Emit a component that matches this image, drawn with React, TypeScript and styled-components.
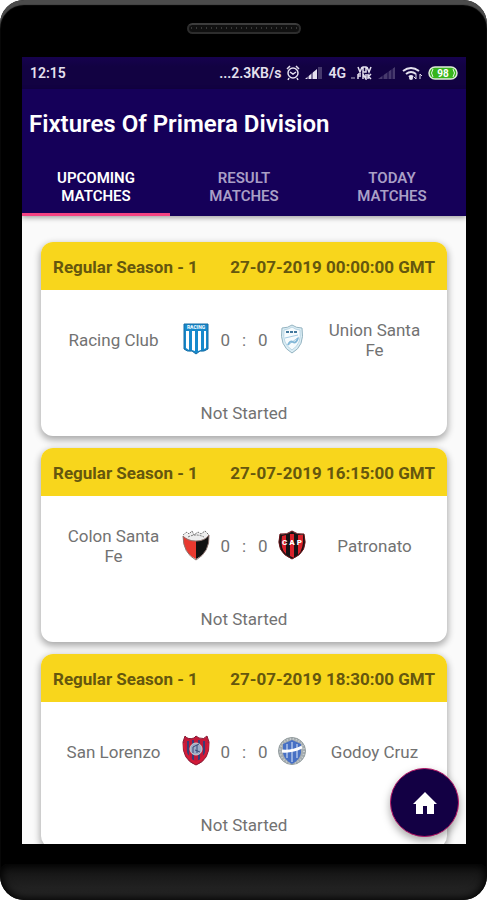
import React, { useState } from "react";
import styled, { createGlobalStyle } from "styled-components";

const GlobalStyle = createGlobalStyle`
  *, *::before, *::after { box-sizing: border-box; }
  body { margin: 0; background: #fff; font-family: Roboto, "Liberation Sans", sans-serif; }
  h1, h2, p { margin: 0; }
`;

const Phone = styled.div`
  display: flex;
  flex-direction: column;
  height: 100vh;
  padding: 0 21px 0 22px;
  background: #000;
  border-radius: 24px;
  overflow: hidden;
  box-shadow: inset 0 5px 1px #4b4b4b;
`;

const TopBezel = styled.div`
  flex: none;
  display: flex;
  justify-content: center;
  height: 57px;
  padding-top: 23px;
`;

const Speaker = styled.div`
  width: 114px;
  height: 11px;
  border: 2px solid #2d2d2d;
  border-top-color: #3c3c3c;
  border-radius: 6px;
  background: radial-gradient(circle, #383838 1px, #101010 1px) 0 0 / 5px 6px;
`;

const BottomBezel = styled.div`
  flex: none;
  height: 36px;
  margin: 20px -21px 0 -22px;
  border-radius: 8px 8px 24px 24px;
  background: linear-gradient(#111, #222 70%, #292929);
  box-shadow: inset 0 0 8px 2px #000;
`;

const Screen = styled.div`
  position: relative;
  flex: 1;
  min-height: 0;
  display: flex;
  flex-direction: column;
  background: #fafafa;
  overflow: hidden;
`;

const StatusBar = styled.div`
  flex: none;
  display: flex;
  align-items: center;
  justify-content: space-between;
  height: 32px;
  padding: 0 8px;
  background: linear-gradient(#16024e, #120242 30%);
  color: #e4e0ee;
  font-size: 14px;
  font-weight: 600;
`;

const StatusGroup = styled.div`
  display: flex;
  align-items: center;
  gap: 5px;
  font-size: 14px;
  svg { display: block; flex: none; }
`;

const Header = styled.header`
  position: relative;
  flex: none;
  background: #150059;
  color: #fff;
  box-shadow: 0 2px 5px rgba(0, 0, 0, 0.35);
`;

const Title = styled.h1`
  padding: 20px 7px 0;
  height: 70px;
  font-size: 24px;
  line-height: 30px;
  font-weight: 600;
  white-space: nowrap;
`;

const Tabs = styled.div`
  display: grid;
  grid-template-columns: repeat(3, 1fr);
`;

const Tab = styled.button<{ $active: boolean }>`
  height: 57px;
  padding: 2px 24px 0;
  border: 0;
  border-bottom: 3px solid ${(p) => (p.$active ? "#f44283" : "transparent")};
  background: transparent;
  color: ${(p) => (p.$active ? "#fff" : "#a99fc6")};
  font: 600 15px/18px Roboto, "Liberation Sans", sans-serif;
  text-transform: uppercase;
  cursor: pointer;
`;

const Fixtures = styled.main`
  flex: 1;
  min-height: 0;
  display: flex;
  flex-direction: column;
  gap: 12px;
  padding: 26px 19px 0;
  overflow: hidden;
`;

const Card = styled.article`
  flex: none;
  border-radius: 12px;
  background: #fff;
  box-shadow: 0 3px 7px 1px rgba(0, 0, 0, 0.32);
  overflow: hidden;
`;

const CardHeader = styled.div`
  display: flex;
  align-items: center;
  justify-content: space-between;
  height: 48px;
  padding: 2px 12px 0;
  background: #f8d61c;
  color: #65570e;
  font-size: 17px;
  white-space: nowrap;
`;

const HeaderText = styled.h2`
  font-size: 17px;
  font-weight: 700;
`;

const HeaderTime = styled.time`
  font-weight: 700;
`;

const Match = styled.div`
  display: grid;
  grid-template-columns: minmax(0, 1fr) 28px 68px 28px minmax(0, 1fr);
  align-items: center;
  height: 98px;
  padding: 0 8px;
  color: #727272;
  font-size: 17px;
  line-height: 20px;
  text-align: center;
`;

const Team = styled.p`
  padding: 2px 18px 0 14px;

  &:last-child {
    padding: 2px 14px 0 18px;
  }
`;

const Score = styled.p`
  display: flex;
  justify-content: center;
  gap: 12px;
  padding-top: 2px;
  font-size: 17px;
`;

const Crest = styled.svg`
  display: block;
  width: 28px;
  height: 32px;
`;

const State = styled.p`
  height: 48px;
  padding-top: 14px;
  color: #727272;
  font-size: 17px;
  line-height: 22px;
  text-align: center;
`;

const HomeButton = styled.button`
  position: absolute;
  right: 7px;
  bottom: 7px;
  display: grid;
  place-items: center;
  width: 69px;
  height: 69px;
  padding: 0;
  border: 1px solid #b51365;
  border-radius: 50%;
  background: #130044;
  box-shadow: 0 4px 8px rgba(0, 0, 0, 0.35);
  cursor: pointer;
`;

const RacingCrest = () => (
  <Crest viewBox="0 0 28 32" aria-hidden="true">
    <path d="M2 1H26V26Q22 29 18 28L14 31L10 28Q5 29 2 26Z" fill="#1689cc" />
    <path d="M4 8H7V27L4 25ZM10 8H13V28L10 27ZM16 8H19V27L16 28ZM22 8H24V25L22 26Z" fill="#fff" />
    <path d="M2 1H26V26Q22 29 18 28L14 31L10 28Q5 29 2 26Z" fill="none" stroke="#166ca4" />
    <text x="14" y="6" textAnchor="middle" fontSize="5" fontWeight="700" fill="#fff">RACING</text>
  </Crest>
);

const UnionCrest = () => (
  <Crest viewBox="0 0 28 32" aria-hidden="true">
    <path d="M4 5Q10 5 14 2Q18 5 24 5Q27 23 14 30Q1 23 4 5Z" fill="#dceef5" stroke="#94b3c1" />
    <path d="M6 7Q11 6 14 4Q18 7 22 7Q24 21 14 27Q4 21 6 7Z" fill="#f6fbfd" stroke="#b9d5e4" />
    <path d="M8 9H20" stroke="#42789d" strokeWidth="2" strokeDasharray="3 1" />
    <path d="M7 15L20 12M10 22L21 14" fill="none" stroke="#a5cbe2" />
    <path d="M10 22Q12 17 15 19T20 15" fill="none" stroke="#82b7d7" strokeWidth="2" />
  </Crest>
);

const ColonCrest = () => (
  <Crest viewBox="0 0 28 32" aria-hidden="true">
    <path d="M1 7Q5 4 7 4L10 1L12 5L16 3L19 5L23 1L27 6Q28 22 14 31Q1 24 1 7Z" fill="#eee" />
    <path d="M1 7Q7 12 14 12V30Q1 24 1 7Z" fill="#e8392f" />
    <path d="M14 12Q23 12 27 6Q28 23 14 30Z" fill="#111" />
    <path d="M1 6L5 3L7 5L10 2L12 6L16 3L19 5L23 2L27 6M6 8Q14 4 22 8" fill="none" stroke="#777" strokeDasharray="2 1" />
    <path d="M1 7Q5 12 14 12Q23 12 27 6Q28 23 14 31Q1 24 1 7" fill="none" stroke="#8d7470" />
  </Crest>
);

const PatronatoCrest = () => (
  <Crest viewBox="0 0 28 32" aria-hidden="true">
    <path d="M2 5Q9 6 14 2Q19 6 26 5Q31 23 14 30Q-3 23 2 5Z" fill="#171315" />
    <path d="M4 7L8 6V25Q2 20 4 7ZM12 5H16V29L12 27ZM20 6H25Q26 20 20 26Z" fill="#da222b" />
    <path d="M2 5Q9 6 14 2Q19 6 26 5Q31 23 14 30Q-3 23 2 5Z" fill="none" stroke="#6a1318" />
    <text x="14" y="16" textAnchor="middle" fontSize="8" fontWeight="900" fill="#fff">C A P</text>
  </Crest>
);

const LorenzoCrest = () => (
  <Crest viewBox="0 0 28 32" aria-hidden="true">
    <path d="M3 1Q6 5 12 3L14 1L17 3Q22 5 25 1L27 7Q28 25 14 30Q0 25 1 7Z" fill="#c31938" stroke="#871b36" />
    <path d="M6 6V22M11 5V27M17 5V27M22 6V22" stroke="#3b3d76" strokeWidth="2" />
    <path d="M2 8Q2 22 14 28Q26 22 26 8" fill="none" stroke="#d31b38" strokeWidth="2" />
    <circle cx="14" cy="14" r="6" fill="#9bacc7" stroke="#ccc" />
    <path d="M11 18V12L17 9M13 15L18 17M15 10V18" stroke="#384a79" fill="none" />
  </Crest>
);

const GodoyCrest = () => (
  <Crest viewBox="0 0 28 32" aria-hidden="true">
    <circle cx="14" cy="16" r="13.5" fill="#a6adb0" stroke="#929b9d" />
    <circle cx="14" cy="16" r="12" fill="none" stroke="#c9cfd1" strokeWidth="2" strokeDasharray="1 2" />
    <path d="M5 9L14 5L23 9V18Q22 25 14 29Q6 25 5 18Z" fill="#4770c4" />
    <path d="M9 9V23M14 7V27M19 9V23" stroke="#dfeafa" />
    <path d="M4 16Q14 17 24 12" fill="none" stroke="#fff" strokeWidth="3" />
  </Crest>
);

type Fixture = {
  time: string;
  home: string;
  away: string;
  HomeCrest: React.FC;
  AwayCrest: React.FC;
};

const fixtures: Fixture[] = [
  { time: "27-07-2019 00:00:00 GMT", home: "Racing Club", away: "Union Santa Fe", HomeCrest: RacingCrest, AwayCrest: UnionCrest },
  { time: "27-07-2019 16:15:00 GMT", home: "Colon Santa Fe", away: "Patronato", HomeCrest: ColonCrest, AwayCrest: PatronatoCrest },
  { time: "27-07-2019 18:30:00 GMT", home: "San Lorenzo", away: "Godoy Cruz", HomeCrest: LorenzoCrest, AwayCrest: GodoyCrest },
];

const tabs = ["Upcoming Matches", "Result Matches", "Today Matches"];

const StatusIcons = () => (
  <StatusGroup>
    <span>...2.3KB/s</span>
    <svg width="14" height="16" viewBox="0 0 14 16" fill="none" stroke="currentColor" strokeWidth="1.5">
      <circle cx="7" cy="8" r="5" /><path d="M1 4L4 1M10 1L13 4M4 7L7 9L10 7M3 13L2 15M11 13L12 15" />
    </svg>
    <svg width="18" height="14" viewBox="0 0 18 14" fill="currentColor">
      <path d="M0 13L12 3V13Z" /><path d="M13 1H17V13H13Z" opacity=".25" />
      <path d="M3 9V13M7 6V13" stroke="#120242" />
    </svg>
    <span>4G</span>
    <svg width="21" height="14" viewBox="0 0 21 14" stroke="currentColor" fill="none">
      <path d="M0 12H4" opacity=".4" strokeWidth="2" />
      <path d="M7 1L9 6L11 1M12 1H15V6H12ZM16 1L18 6L20 1M7 8V13M7 8H10M7 10H10M12 13V8L15 13V8M17 8V13M17 11L20 8M17 10L20 13" strokeWidth="1.5" />
    </svg>
    <svg width="20" height="14" viewBox="0 0 20 14" fill="currentColor" opacity=".25">
      <path d="M1 13L18 1V13Z" /><path d="M6 8V13M11 5V13M15 2V13" stroke="#120242" />
    </svg>
    <svg width="21" height="15" viewBox="0 0 21 15" fill="none" stroke="currentColor" strokeWidth="2">
      <path d="M1 5Q9 -1 17 5M4 8Q9 4 14 8M7 11Q9 9 11 11" /><circle cx="9" cy="12" r="1" /><path d="M14 8V13L12 11M18 13V8L20 10" strokeWidth="1" />
    </svg>
    <svg width="30" height="14" viewBox="0 0 30 14">
      <rect x="1" y="1" width="28" height="12" rx="6" fill="#37b51c" stroke="#ddebd7" strokeWidth="1.5" />
      <path d="M5 3Q2 7 5 11M25 3Q28 7 25 11" fill="none" stroke="#e9f5e7" />
      <text x="15" y="11" textAnchor="middle" fontSize="10" fontWeight="700" fill="#fff">98</text>
    </svg>
  </StatusGroup>
);

export default function App() {
  const [active, setActive] = useState(0);
  return (
    <>
      <GlobalStyle />
      <Phone>
        <TopBezel><Speaker /></TopBezel>
        <Screen>
          <StatusBar><span>12:15</span><StatusIcons /></StatusBar>
          <Header>
            <Title>Fixtures Of Primera Division</Title>
            <Tabs role="tablist">
              {tabs.map((label, i) => (
                <Tab key={label} role="tab" aria-selected={i === active} $active={i === active} onClick={() => setActive(i)}>
                  {label}
                </Tab>
              ))}
            </Tabs>
          </Header>
          <Fixtures>
            {fixtures.map(({ time, home, away, HomeCrest, AwayCrest }) => (
              <Card key={time}>
                <CardHeader>
                  <HeaderText>Regular Season - 1</HeaderText>
                  <HeaderTime>{time}</HeaderTime>
                </CardHeader>
                <Match>
                  <Team>{home}</Team>
                  <HomeCrest />
                  <Score><span>0</span><span>:</span><span>0</span></Score>
                  <AwayCrest />
                  <Team>{away}</Team>
                </Match>
                <State>Not Started</State>
              </Card>
            ))}
          </Fixtures>
          <HomeButton aria-label="Home">
            <svg width="24" height="22" viewBox="0 0 24 22" fill="#fff" aria-hidden="true">
              <path d="M12 0L24 12H21V22H14V14H10V22H3V12H0Z" />
            </svg>
          </HomeButton>
        </Screen>
        <BottomBezel />
      </Phone>
    </>
  );
}
